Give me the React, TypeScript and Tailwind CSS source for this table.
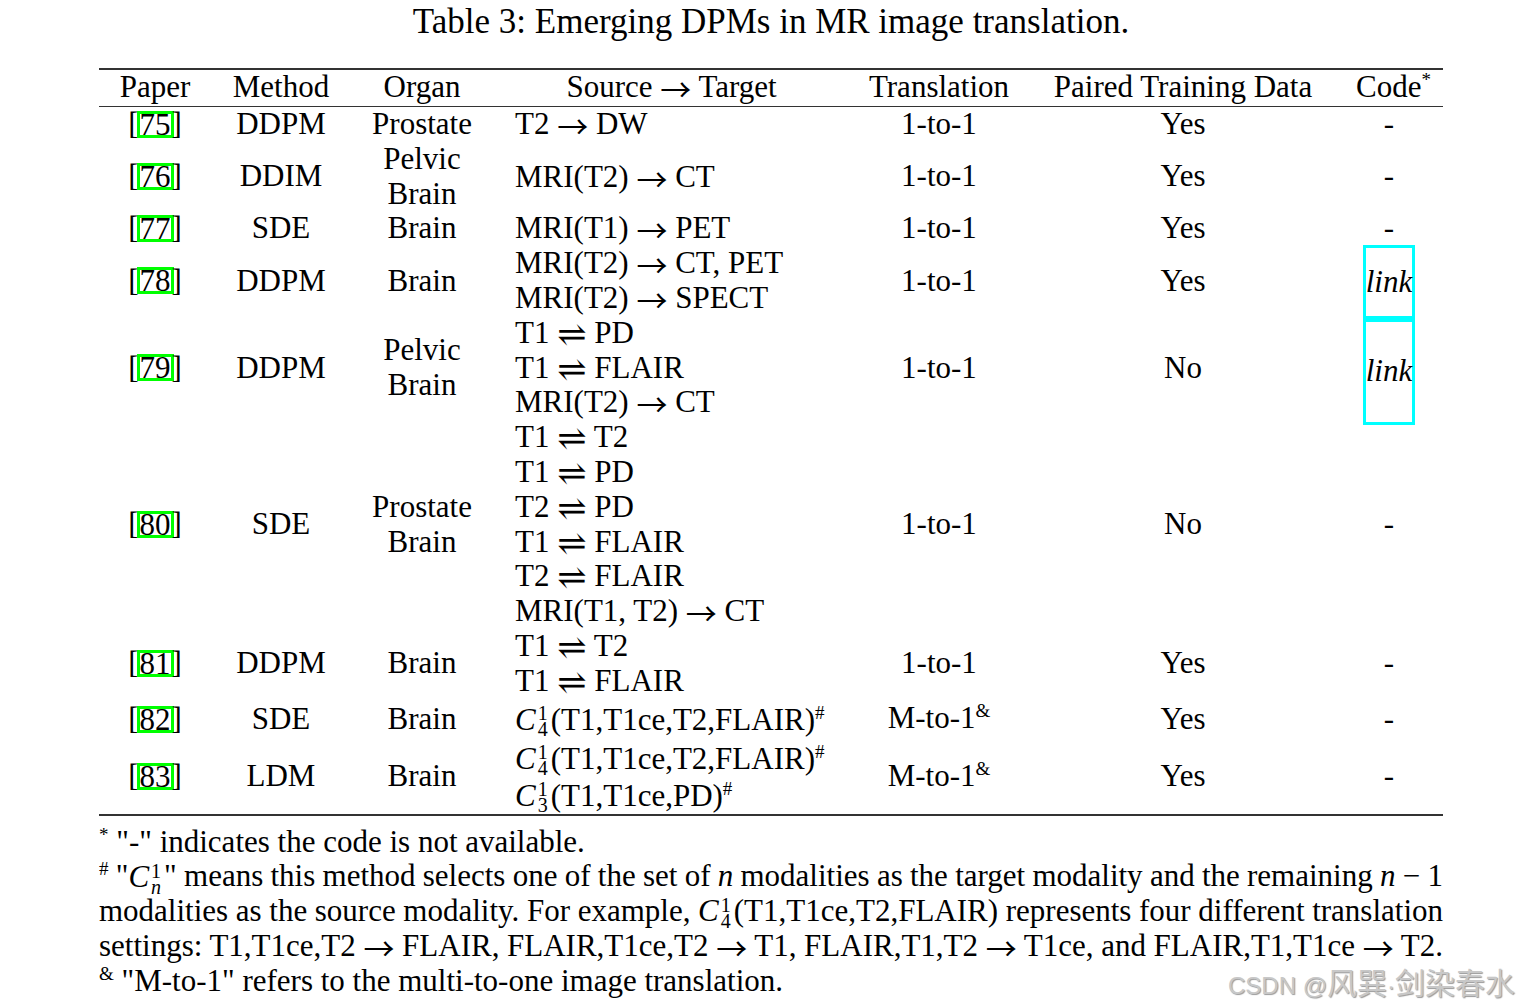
import type { ReactNode } from 'react';

function Sup({ children }: { children: ReactNode }) {
  return <span className="align-super text-[19px] leading-none">{children}</span>;
}

// long thin arrow, like LaTeX \rightarrow
function To() {
  return <span className="font-['Noto_Sans_CJK_SC'] leading-none align-[-4px]">→</span>;
}

// \rightleftharpoons
function Eq() {
  return <span className="font-['DejaVu_Serif'] text-[35px] leading-none align-[-3px]">⇌</span>;
}

// C with stacked sup/sub, like $C^1_4$
function Comb({ sub, sup = '1' }: { sub: ReactNode; sup?: string }) {
  return (
    <span className="inline-flex items-center">
      <span className="italic">C</span>
      <span className="inline-flex flex-col items-center mt-[3px] ml-[2px] mr-[3px] text-[20px] leading-[16px]">
        <span>{sup}</span>
        <span>{sub}</span>
      </span>
    </span>
  );
}

interface Row {
  ref: string;
  method: string;
  organ: string[];
  src: ReactNode[];
  trans: ReactNode;
  paired: string;
  lh: string;
  code?: 'a' | 'b';
}

const cPart = <>(T1,T1ce,T2,FLAIR)<Sup>#</Sup></>;
const mto1 = <span>M-to-1<Sup>&amp;</Sup></span>;
const one = 'h-[34.8px] leading-[34.8px]';

const rows: Row[] = [
  { ref: '75', method: 'DDPM', organ: ['Prostate'], src: [<>T2 <To /> DW</>], trans: '1-to-1', paired: 'Yes', lh: one },
  { ref: '76', method: 'DDIM', organ: ['Pelvic', 'Brain'], src: [<>MRI(T2) <To /> CT</>], trans: '1-to-1', paired: 'Yes', lh: 'h-[69.6px] leading-[69.6px]' },
  { ref: '77', method: 'SDE', organ: ['Brain'], src: [<>MRI(T1) <To /> PET</>], trans: '1-to-1', paired: 'Yes', lh: one },
  {
    ref: '78', method: 'DDPM', organ: ['Brain'],
    src: [<>MRI(T2) <To /> CT, PET</>, <>MRI(T2) <To /> SPECT</>],
    trans: '1-to-1', paired: 'Yes', lh: one, code: 'a',
  },
  {
    ref: '79', method: 'DDPM', organ: ['Pelvic', 'Brain'],
    src: [<>T1 <Eq /> PD</>, <>T1 <Eq /> FLAIR</>, <>MRI(T2) <To /> CT</>],
    trans: '1-to-1', paired: 'No', lh: one, code: 'b',
  },
  {
    ref: '80', method: 'SDE', organ: ['Prostate', 'Brain'],
    src: [
      <>T1 <Eq /> T2</>,
      <>T1 <Eq /> PD</>,
      <>T2 <Eq /> PD</>,
      <>T1 <Eq /> FLAIR</>,
      <>T2 <Eq /> FLAIR</>,
      <>MRI(T1, T2) <To /> CT</>,
    ],
    trans: '1-to-1', paired: 'No', lh: one,
  },
  { ref: '81', method: 'DDPM', organ: ['Brain'], src: [<>T1 <Eq /> T2</>, <>T1 <Eq /> FLAIR</>], trans: '1-to-1', paired: 'Yes', lh: one },
  { ref: '82', method: 'SDE', organ: ['Brain'], src: [<><Comb sub="4" />{cPart}</>], trans: mto1, paired: 'Yes', lh: 'h-[41px] leading-[41px]' },
  {
    ref: '83', method: 'LDM', organ: ['Brain'],
    src: [<><Comb sub="4" />{cPart}</>, <><Comb sub="3" />(T1,T1ce,PD)<Sup>#</Sup></>],
    trans: mto1, paired: 'Yes', lh: 'h-[37px] leading-[37px]',
  },
];

const cols = 'grid grid-cols-[112px_140px_142px_357px_178px_310px_105px]';

function CodeCell({ code }: { code?: 'a' | 'b' }) {
  if (code === 'a')
    return (
      <div className="flex flex-col items-center pr-[3px]">
        <div className="mt-[-1px] mb-[-6px] h-[74px] w-[52px] border-[3px] border-[#00ffff] flex items-center justify-center italic">link</div>
      </div>
    );
  if (code === 'b')
    return (
      <div className="flex flex-col items-center pr-[3px]">
        <div className="mt-[3px] mb-[-6px] h-[106px] w-[52px] border-[3px] border-[#00ffff] flex items-center justify-center italic">link</div>
      </div>
    );
  return <div className="flex items-center justify-center pr-[3px]">-</div>;
}

export default function App() {
  return (
    <div className="relative w-[1528px] h-[1008px] overflow-hidden bg-white text-black text-[31px] leading-[34.8px] font-['Liberation_Serif','DejaVu_Serif',serif]">
      <div className="ml-[99px] w-[1344px]">
        <div className="h-[44px] leading-[44px] text-center text-[35px]">Table 3: Emerging DPMs in MR image translation.</div>

        <div className="mt-[24px] h-[2px] bg-[#333]" />
        {/* header */}
        <div className={`${cols} h-[36px]`}>
          <div className="text-center">Paper</div>
          <div className="text-center">Method</div>
          <div className="text-center">Organ</div>
          <div className="text-center">Source <To /> Target</div>
          <div className="text-center">Translation</div>
          <div className="text-center">Paired Training Data</div>
          <div className="text-center pl-[6px]">Code<Sup>*</Sup></div>
        </div>
        <div className="h-[1px] bg-[#333]" />

        {rows.map((r) => (
          <div key={r.ref} className={cols}>
            <div className="flex items-center justify-center">
              <span className="mr-[-2px]">[</span>
              <span className="inline-block h-[27px] border-[3px] border-[#00ff00] leading-[21px]">{r.ref}</span>
              <span className="ml-[-2px]">]</span>
            </div>
            <div className="flex items-center justify-center">{r.method}</div>
            <div className="flex flex-col items-center justify-center">
              {r.organ.map((o) => (
                <div key={o}>{o}</div>
              ))}
            </div>
            <div className="flex flex-col justify-center pl-[22px]">
              {r.src.map((s, i) => (
                <div key={i} className={`${r.lh} whitespace-nowrap`}>{s}</div>
              ))}
            </div>
            <div className="flex items-center justify-center">{r.trans}</div>
            <div className="flex items-center justify-center">{r.paired}</div>
            <CodeCell code={r.code} />
          </div>
        ))}

        <div className="h-[2px] bg-[#333]" />

        {/* footnotes */}
        <div className="mt-[9px] leading-[34.75px]">
          <div className="h-[34.75px]">
            <Sup>*</Sup> "-" indicates the code is not available.
          </div>
          <div className="h-[34.75px] whitespace-nowrap text-justify [text-align-last:justify] [word-spacing:-3px]">
            <Sup>#</Sup> "<Comb sub={<span className="italic">n</span>} />" means this method selects one of the set of <span className="italic">n</span> modalities as the target modality and the remaining <span className="italic">n</span> − 1
          </div>
          <div className="h-[34.75px] whitespace-nowrap text-justify [text-align-last:justify] [word-spacing:-3px]">
            modalities as the source modality. For example, <Comb sub="4" />(T1,T1ce,T2,FLAIR) represents four different translation
          </div>
          <div className="h-[34.75px] whitespace-nowrap text-justify [text-align-last:justify] [word-spacing:-3px]">
            settings: T1,T1ce,T2 <To /> FLAIR, FLAIR,T1ce,T2 <To /> T1, FLAIR,T1,T2 <To /> T1ce, and FLAIR,T1,T1ce <To /> T2.
          </div>
          <div className="h-[34.75px]">
            <Sup>&amp;</Sup> "M-to-1" refers to the multi-to-one image translation.
          </div>
        </div>
      </div>

      <div className="absolute left-[1228px] top-[962px] leading-[38px] text-[#c8c8c8] [text-shadow:1px_1px_1px_#9a9a9a] whitespace-nowrap">
        <span className="font-['Liberation_Sans',sans-serif] text-[24px]">CSDN @</span>
        <span className="font-['Noto_Sans_CJK_SC',sans-serif] text-[30px]">风巽</span>
        <span className="font-['Liberation_Sans',sans-serif] text-[24px]">·</span>
        <span className="font-['Noto_Sans_CJK_SC',sans-serif] text-[30px]">剑染春水</span>
      </div>
    </div>
  );
}
